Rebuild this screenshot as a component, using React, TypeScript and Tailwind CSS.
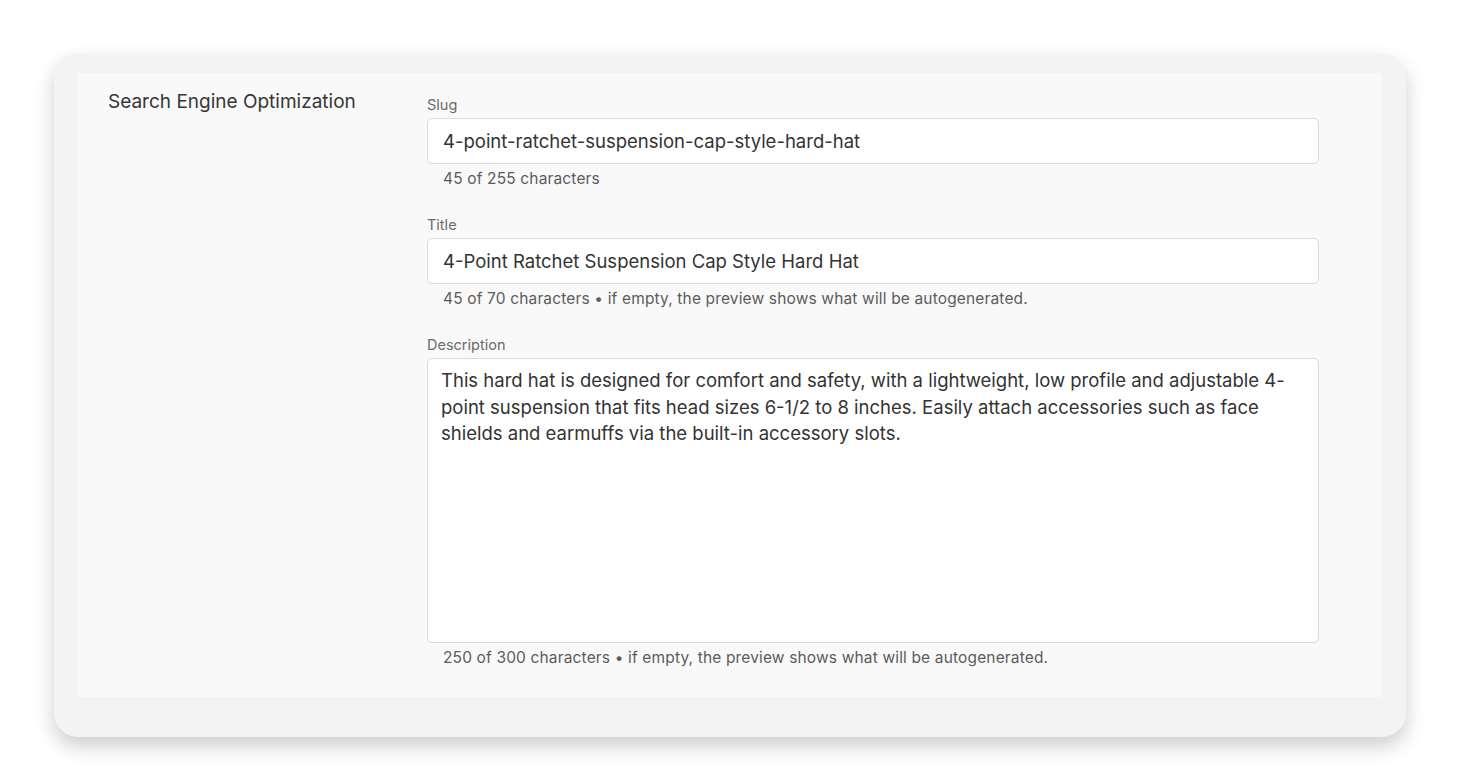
import { ReactNode } from 'react';

const font = { fontFamily: 'Inter, "Noto Sans", sans-serif' };

function Field({ label, helper, children }: { label: string; helper: string; children: ReactNode }) {
  return (
    <div className="flex flex-col">
      <label className="text-[14.5px] leading-[20px] text-[#6b6b6b] mb-[3px]">{label}</label>
      {children}
      <div className="mt-[5px] pl-[16px] text-[15.5px] leading-[20px] tracking-[0.15px] text-[#5c5c5c]">{helper}</div>
    </div>
  );
}

export default function App() {
  return (
    <div className="min-h-screen bg-white pl-[54px] pt-[54px]" style={font}>
      {/* Outer card */}
      <div className="w-[1352px] h-[683px] rounded-[24px] bg-[#f3f3f3] pl-[23px] pr-[25px] pt-[19px] pb-[40px] shadow-[0_9px_20px_rgba(0,0,0,0.2)]">
        {/* Inner panel */}
        <div className="h-full bg-[#f9f9f9] flex pl-[31px] pr-[62px] pt-[22px] pb-[28px]">
          <h2 className="w-[319px] shrink-0 -mt-[5px] text-[19px] leading-[24px] text-[#363636]">
            Search Engine Optimization
          </h2>

          <div className="flex-1 flex flex-col gap-[26px]">
            <Field label="Slug" helper="45 of 255 characters">
              <input
                readOnly
                value="4-point-ratchet-suspension-cap-style-hard-hat"
                className="h-[46px] w-full rounded-[5px] border border-[#dadada] bg-white px-[15px] text-[18.5px] text-[#333] outline-none"
              />
            </Field>

            <Field label="Title" helper="45 of 70 characters • if empty, the preview shows what will be autogenerated.">
              <input
                readOnly
                value="4-Point Ratchet Suspension Cap Style Hard Hat"
                className="h-[46px] w-full rounded-[5px] border border-[#dadada] bg-white px-[15px] text-[18.5px] text-[#333] outline-none"
              />
            </Field>

            <Field label="Description" helper="250 of 300 characters • if empty, the preview shows what will be autogenerated.">
              <textarea
                readOnly
                value="This hard hat is designed for comfort and safety, with a lightweight, low profile and adjustable 4-point suspension that fits head sizes 6-1/2 to 8 inches. Easily attach accessories such as face shields and earmuffs via the built-in accessory slots."
                className="h-[285px] w-full resize-none rounded-[5px] border border-[#dadada] bg-white px-[13px] pt-[8px] text-[18.5px] leading-[26.5px] text-[#333] outline-none"
              />
            </Field>
          </div>
        </div>
      </div>
    </div>
  );
}
